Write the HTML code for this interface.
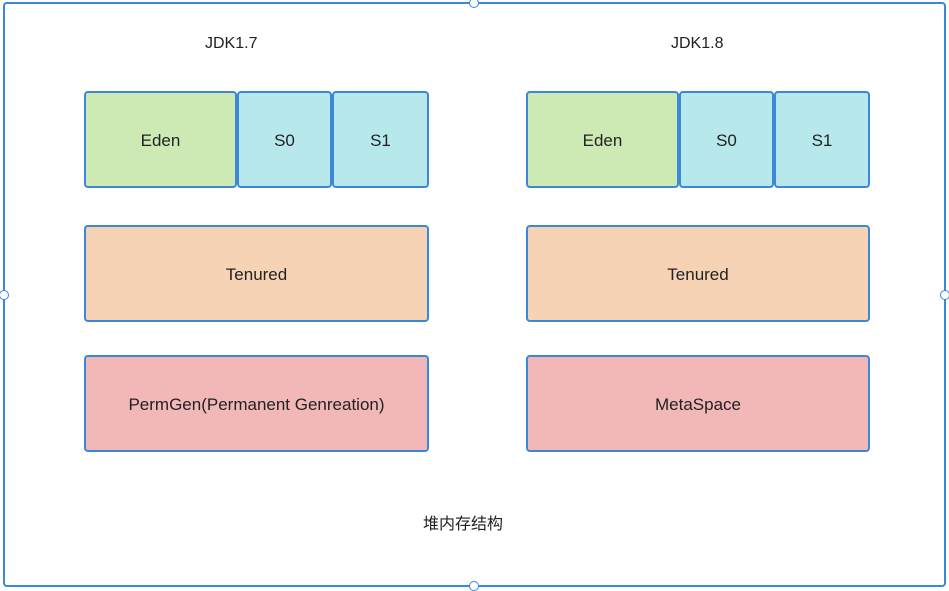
<!DOCTYPE html><html><head><style>
body{margin:0;width:949px;height:589px;background:#fff;position:relative;overflow:hidden;font-family:"Liberation Sans","Noto Sans CJK SC",sans-serif;font-size:17px;color:#222}
.o{position:absolute;left:3px;top:2px;width:939px;height:581px;border:2px solid #3b88da;border-radius:4px}
.b{position:absolute;box-sizing:border-box;border:2px solid #3b88da;border-radius:4px;display:flex;align-items:center;justify-content:center;padding-top:3px}
.g{background:#cdeab5}.c{background:#b7e9ec}.t{background:#f6d3b5}.p{background:#f2b8b7}
.l{position:absolute;font-size:16px}
.h{position:absolute;width:10px;height:10px;border-radius:50%;background:#fff;border:1px solid #3b88da;box-sizing:border-box}
</style></head><body>
<div class="o"></div>
<div class="h" style="left:469px;top:-2px"></div>
<div class="h" style="left:469px;top:581px"></div>
<div class="h" style="left:-1px;top:290px"></div>
<div class="h" style="left:940px;top:290px"></div>
<div class="l" style="left:205px;top:35px">JDK1.7</div>
<div class="l" style="left:671px;top:35px">JDK1.8</div>
<div class="b g" style="left:84px;top:91px;width:153px;height:97px">Eden</div>
<div class="b c" style="left:237px;top:91px;width:95px;height:97px">S0</div>
<div class="b c" style="left:332px;top:91px;width:97px;height:97px">S1</div>
<div class="b t" style="left:84px;top:225px;width:345px;height:97px">Tenured</div>
<div class="b p" style="left:84px;top:355px;width:345px;height:97px">PermGen(Permanent Genreation)</div>
<div class="b g" style="left:526px;top:91px;width:153px;height:97px">Eden</div>
<div class="b c" style="left:679px;top:91px;width:95px;height:97px">S0</div>
<div class="b c" style="left:774px;top:91px;width:96px;height:97px">S1</div>
<div class="b t" style="left:526px;top:225px;width:344px;height:97px">Tenured</div>
<div class="b p" style="left:526px;top:355px;width:344px;height:97px">MetaSpace</div>
<div class="l" style="left:423px;top:510px;font-size:16px">堆内存结构</div>
</body></html>
